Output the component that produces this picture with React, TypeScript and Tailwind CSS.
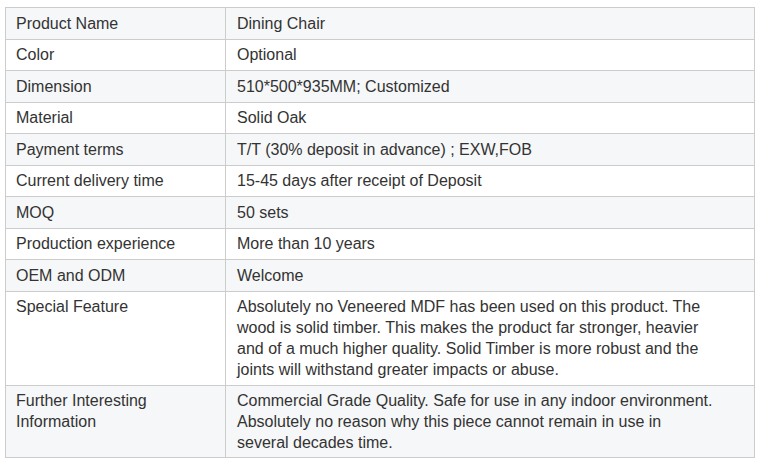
import React from "react";

const rows: [string, string[]][] = [
  ["Product Name", ["Dining Chair"]],
  ["Color", ["Optional"]],
  ["Dimension", ["510*500*935MM; Customized"]],
  ["Material", ["Solid Oak"]],
  ["Payment terms", ["T/T (30% deposit in advance) ; EXW,FOB"]],
  ["Current delivery time", ["15-45 days after receipt of Deposit"]],
  ["MOQ", ["50 sets"]],
  ["Production experience", ["More than 10 years"]],
  ["OEM and ODM", ["Welcome"]],
  [
    "Special Feature",
    [
      "Absolutely no Veneered MDF has been used on this product. The",
      "wood is solid timber. This makes the product far stronger, heavier",
      "and of a much higher quality. Solid Timber is more robust and the",
      "joints will withstand greater impacts or abuse.",
    ],
  ],
  [
    "Further Interesting Information",
    [
      "Commercial Grade Quality. Safe for use in any indoor environment.",
      "Absolutely no reason why this piece cannot remain in use in",
      "several decades time.",
    ],
  ],
];

export default function App() {
  return (
    <div
      className="w-[760px] h-[464px] bg-white pt-[7px] pl-[5px]"
      style={{ fontFamily: '"Liberation Sans", Arial, sans-serif' }}
    >
      <table className="w-[750px] border-collapse text-[16px] leading-[21px] text-[#333333]">
        <tbody>
          {rows.map(([k, v], i) => {
            const pad = i === 10 ? "pt-[4px] pb-[3.5px]" : "pt-[4.5px] pb-[5px]";
            return (
              <tr key={i} className={i % 2 === 0 ? "bg-[#f6f7f8]" : "bg-white"}>
                <td className={`w-[220px] border border-[#cccccc] px-[10px] align-top ${pad}`}>
                  {i === 10 ? (
                    <>
                      Further Interesting
                      <br />
                      Information
                    </>
                  ) : (
                    k
                  )}
                </td>
                <td className={`border border-[#cccccc] pl-[11px] pr-[10px] align-top whitespace-nowrap ${pad}`}>
                  {v.map((line, j) => (
                    <React.Fragment key={j}>
                      {j > 0 && <br />}
                      {line}
                    </React.Fragment>
                  ))}
                </td>
              </tr>
            );
          })}
        </tbody>
      </table>
    </div>
  );
}
